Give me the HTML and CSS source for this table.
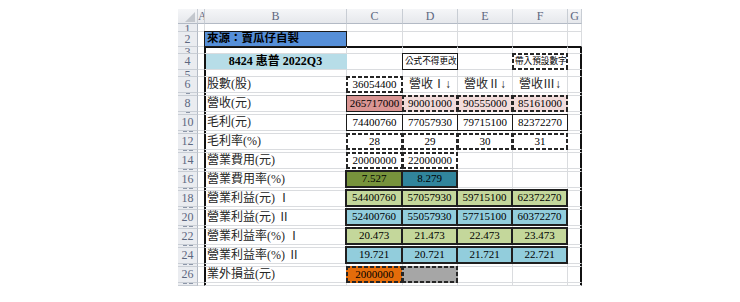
FILE: index.html
```html
<!DOCTYPE html>
<html lang="zh-Hant">
<head>
<meta charset="utf-8">
<title>8424 惠普 2022Q3</title>
<link rel="stylesheet" href="styles.css">
</head>
<body>
<div class="sheet">
  <div class="row hdr">
    <div class="corner"><svg width="20" height="15" viewBox="0 0 20 15"><polygon points="17,3 17,13 7,13" fill="#c3c7cd"/></svg></div>
    <div>A</div><div>B</div><div>C</div><div>D</div><div>E</div><div>F</div><div>G</div>
  </div>

  <div class="row h8"><div class="rh thin7">1</div><div></div><div></div><div></div><div></div><div></div><div></div><div></div></div>

  <div class="row h15 r2"><div class="rh">2</div><div></div><div class="v src">來源：賣瓜仔自製</div><div></div><div></div><div></div><div></div><div></div></div>

  <div class="row h7 bx r3"><div class="rh thin7">3</div><div></div><div></div><div></div><div></div><div></div><div></div><div></div></div>

  <div class="row h16 bx"><div class="rh">4</div><div></div><div class="title">8424 惠普 2022Q3</div><div></div><div class="v note">公式不得更改</div><div></div><div class="d note">帶入預設數字</div><div></div></div>

  <div class="row h7 bx"><div class="rh thin7">5</div><div></div><div></div><div></div><div></div><div></div><div></div><div></div></div>

  <div class="row h16 bx"><div class="rh">6</div><div></div><div class="lbl">股數(股)</div><div class="d num">36054400</div><div class="hd">營收Ⅰ↓</div><div class="hd">營收Ⅱ↓</div><div class="hd">營收Ⅲ↓</div><div></div></div>

  <div class="row h3 bx"><div class="rh thin3"></div><div></div><div></div><div></div><div></div><div></div><div></div><div></div></div>

  <div class="row h16 bx"><div class="rh">8</div><div></div><div class="lbl">營收(元)</div><div class="v num pink">265717000</div><div class="d num lpink">90001000</div><div class="d num lpink">90555000</div><div class="d num lpink">85161000</div><div></div></div>

  <div class="row h3 bx"><div class="rh thin3"></div><div></div><div></div><div></div><div></div><div></div><div></div><div></div></div>

  <div class="row h16 bx"><div class="rh">10</div><div></div><div class="lbl">毛利(元)</div><div class="v num">74400760</div><div class="v num">77057930</div><div class="v num">79715100</div><div class="v num">82372270</div><div></div></div>

  <div class="row h3 bx"><div class="rh thin3 two"></div><div></div><div></div><div></div><div></div><div></div><div></div><div></div></div>

  <div class="row h16 bx"><div class="rh">12</div><div></div><div class="lbl">毛利率(%)</div><div class="d num">28</div><div class="d num">29</div><div class="d num">30</div><div class="d num">31</div><div></div></div>

  <div class="row h3 bx"><div class="rh thin3 two"></div><div></div><div></div><div></div><div></div><div></div><div></div><div></div></div>

  <div class="row h16 bx"><div class="rh">14</div><div></div><div class="lbl">營業費用(元)</div><div class="d num">20000000</div><div class="d num">22000000</div><div></div><div></div><div></div></div>

  <div class="row h3 bx"><div class="rh thin3 two"></div><div></div><div></div><div></div><div></div><div></div><div></div><div></div></div>

  <div class="row h16 bx"><div class="rh">16</div><div></div><div class="lbl">營業費用率(%)</div><div class="w num olive">7.527</div><div class="w num teal">8.279</div><div></div><div></div><div></div></div>

  <div class="row h3 bx"><div class="rh thin3 two"></div><div></div><div></div><div></div><div></div><div></div><div></div><div></div></div>

  <div class="row h16 bx"><div class="rh">18</div><div></div><div class="lbl">營業利益(元) Ⅰ</div><div class="w num lg">54400760</div><div class="w num lg">57057930</div><div class="w num lg">59715100</div><div class="w num lg">62372270</div><div></div></div>

  <div class="row h3 bx"><div class="rh thin3 two"></div><div></div><div></div><div></div><div></div><div></div><div></div><div></div></div>

  <div class="row h16 bx"><div class="rh">20</div><div></div><div class="lbl">營業利益(元) Ⅱ</div><div class="w num lb">52400760</div><div class="w num lb">55057930</div><div class="w num lb">57715100</div><div class="w num lb">60372270</div><div></div></div>

  <div class="row h3 bx"><div class="rh thin3 two"></div><div></div><div></div><div></div><div></div><div></div><div></div><div></div></div>

  <div class="row h16 bx"><div class="rh">22</div><div></div><div class="lbl">營業利益率(%) Ⅰ</div><div class="w num lg">20.473</div><div class="w num lg">21.473</div><div class="w num lg">22.473</div><div class="w num lg">23.473</div><div></div></div>

  <div class="row h3 bx"><div class="rh thin3 two"></div><div></div><div></div><div></div><div></div><div></div><div></div><div></div></div>

  <div class="row h16 bx"><div class="rh">24</div><div></div><div class="lbl">營業利益率(%) Ⅱ</div><div class="w num lb">19.721</div><div class="w num lb">20.721</div><div class="w num lb">21.721</div><div class="w num lb">22.721</div><div></div></div>

  <div class="row h3 bx"><div class="rh thin3 two"></div><div></div><div></div><div></div><div></div><div></div><div></div><div></div></div>

  <div class="row h16 bx"><div class="rh">26</div><div></div><div class="lbl">業外損益(元)</div><div class="d num orange">2000000</div><div class="d gray"></div><div></div><div></div><div></div></div>

  <div class="row h3 bx"><div class="rh thin3 two"></div><div></div><div></div><div></div><div></div><div></div><div></div><div></div></div>
</div>
</body>
</html>
```

FILE: styles.css
```css
html, body {
  margin: 0;
  padding: 0;
  background: #ffffff;
}

.sheet {
  margin: 9px 0 0 178px;
  width: 404px;
  font-family: "Liberation Serif", "Noto Sans CJK TC", serif;
  color: #000000;
}

.row {
  display: grid;
  grid-template-columns: 20px 7px 142px 56px 55px 55px 55px 14px;
}

.row > div {
  box-sizing: border-box;
  border-right: 1px solid #dadcdf;
  border-bottom: 1px solid #dadcdf;
  min-width: 0;
}

.h15 { height: 15px; }
.h16 { height: 16px; }
.h8 { height: 8px; }
.h7 { height: 7px; }
.h3 { height: 3px; }

/* column header */
.hdr { height: 15px; }
.hdr > div {
  background: linear-gradient(#f5f6f8, #e6e8ec);
  border-right-color: #c8cdd4;
  border-bottom-color: #b3bac5;
  color: #5d6780;
  font-size: 12px;
  line-height: 14px;
  text-align: center;
  overflow: hidden;
}
.hdr > .corner { line-height: 0; }
.corner svg { display: block; }

/* row header */
.row > .rh {
  background: #eaecf0;
  border-right-color: #b3bac5;
  border-bottom-color: #c9ced5;
  color: #5d6780;
  font-size: 12px;
  line-height: 15px;
  text-align: center;
  overflow: hidden;
}
.row > .rh.thin7 { line-height: 10px; }
.row > .rh.thin3 {
  background:
    linear-gradient(#8c96a8, #8c96a8) 8px 0 / 4px 1px no-repeat,
    #eaecf0;
}
.row > .rh.thin3.two {
  background:
    linear-gradient(#8c96a8, #8c96a8) 5px 0 / 4px 1px no-repeat,
    linear-gradient(#8c96a8, #8c96a8) 11px 0 / 4px 1px no-repeat,
    #eaecf0;
}

/* outer black frame around B3:G27 */
.r2 > div:nth-child(n+4) { border-bottom-color: #111; }
.bx > div:nth-child(2) { border-right-color: #111; }
.bx > div:nth-child(3) { box-shadow: inset 1px 0 #111; }
.bx > div:nth-child(8) { border-right-color: #111; box-shadow: inset -1px 0 #111; }
.r3 > div:nth-child(n+3) { box-shadow: inset 0 1px #111; }
.r3 > div:nth-child(3) { box-shadow: inset 1px 0 #111, inset 0 1px #111; }
.r3 > div:nth-child(8) { box-shadow: inset -1px 0 #111, inset 0 1px #111; }

/* text cells */
.lbl {
  font-size: 12px;
  line-height: 15px;
  padding-left: 2px;
  white-space: nowrap;
  color: #262626;
}
.hd {
  font-size: 12px;
  line-height: 15px;
  text-align: center;
  white-space: nowrap;
  color: #262626;
}
.num {
  font-size: 11px;
  line-height: 15px;
  text-align: center;
  white-space: nowrap;
}
.note {
  font-size: 8.6px;
  line-height: 14px;
  padding-left: 2px;
  white-space: nowrap;
  overflow: hidden;
}
.row > .title {
  background: #b7dde8;
  border-right-color: #b7dde8;
  font-size: 12px;
  font-weight: bold;
  line-height: 15px;
  text-align: center;
  white-space: nowrap;
}
.bx > .title { box-shadow: inset 1px 0 #111; }

/* solid bordered value cells */
.row > .v {
  border: 1px solid #1a1a1a;
  margin: -1px 0 0 -1px;
}
.row > .src {
  background: #568fd8;
  font-size: 11.5px;
  font-weight: bold;
  line-height: 13px;
  padding-left: 2px;
  white-space: nowrap;
}
.row > .w {
  border: 2px solid #1f1f1f;
  margin: -2px 0 0 -2px;
  line-height: 13px;
}

/* dashed bordered cells */
.row > .d {
  --ink: #262626;
  --fill: #ffffff;
  border: 0;
  margin: -1px 0 0 -1px;
  background:
    repeating-linear-gradient(90deg, var(--ink) 0 4px, transparent 4px 6px) left top / 100% 2px no-repeat,
    repeating-linear-gradient(90deg, var(--ink) 0 4px, transparent 4px 6px) left bottom / 100% 2px no-repeat,
    repeating-linear-gradient(180deg, var(--ink) 0 4px, transparent 4px 6px) left top / 2px 100% no-repeat,
    repeating-linear-gradient(180deg, var(--ink) 0 4px, transparent 4px 6px) right top / 2px 100% no-repeat,
    var(--fill);
}
.row > .d.num { line-height: 17px; }
.row > .d.note { line-height: 16px; padding-left: 3px; }

/* fills */
.pink { background: #da9694; }
.row > .lpink { --fill: #f2dcdb; }
.olive { background: #77933c; }
.teal { background: #31859c; }
.lg { background: #c4d79b; }
.lb { background: #92cddc; }
.row > .orange { --fill: #e46c0a; }
.row > .gray { --fill: #a6a6a6; }
```
